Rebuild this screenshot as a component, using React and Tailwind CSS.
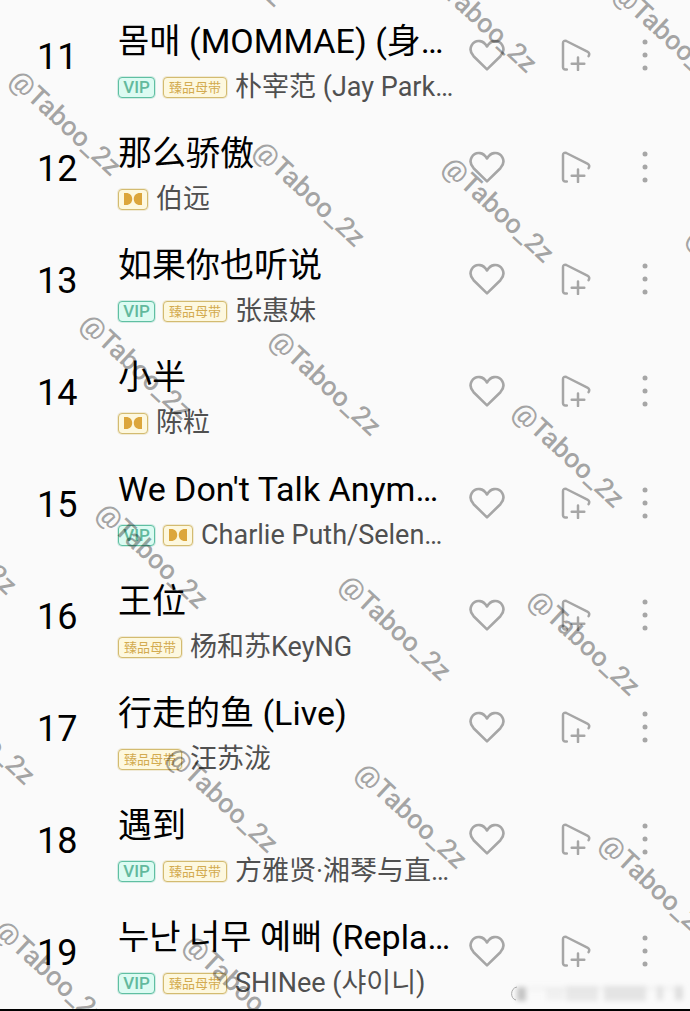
import React, { useState } from 'react';
import clsx from 'clsx';

const songs = [
  { rank: 11, title: '몸매 (MOMMAE) (身…', artist: '朴宰范 (Jay Park…', vip: true, badge: 'master' },
  { rank: 12, title: '那么骄傲', artist: '伯远', badge: 'dolby' },
  { rank: 13, title: '如果你也听说', artist: '张惠妹', vip: true, badge: 'master' },
  { rank: 14, title: '小半', artist: '陈粒', badge: 'dolby' },
  { rank: 15, title: "We Don't Talk Anym…", artist: 'Charlie Puth/Selen…', vip: true, badge: 'dolby' },
  { rank: 16, title: '王位', artist: '杨和苏KeyNG', badge: 'master' },
  { rank: 17, title: '行走的鱼 (Live)', artist: '汪苏泷', badge: 'master' },
  { rank: 18, title: '遇到', artist: '方雅贤·湘琴与直…', vip: true, badge: 'master' },
  { rank: 19, title: '누난 너무 예뻐 (Repla…', artist: 'SHINee (샤이니)', vip: true, badge: 'master' },
];

// centre of the @ sign of every stamp
const stamps = [
  [187, -86], [439, -20], [627, -3],
  [23, 83], [267, 154], [456, 170], [700, 241],
  [94, 327], [283, 343], [526, 415],
  [-81, 502], [110, 516], [353, 588], [542, 603],
  [-63, 692], [180, 760], [369, 776], [613, 847],
  [8, 933], [197, 948], [441, 1021],
];

const HeartIcon = ({ filled }) => (
  <svg viewBox="0 0 36 32" className="h-8 w-9" fill={filled ? 'currentColor' : 'none'} stroke="currentColor" strokeWidth="2.6" strokeLinejoin="round" strokeLinecap="round">
    <path d="M18 30.4 4.6 17.2C-2.4 9.4 4.2 1.2 11 2.1c3 .4 5.3 2.5 7 5.4 1.7-2.9 4-5 7-5.4 6.8-.9 13.4 7.3 6.4 15.1Z" />
  </svg>
);

const PlayNextIcon = () => (
  <svg viewBox="0 0 36 32" className="h-8 w-9" fill="none" stroke="currentColor" strokeWidth="2.5" strokeLinejoin="round" strokeLinecap="round">
    <path d="M9.800 30.500H8.200a2.200 2.200 0 0 1-2.200-2.200V4c0-1.900 1.600-2.800 3.300-2L30.400 12.600c2 1 2.300 2.700 1.200 4.500" />
    <path d="M21 18.600v12.500M14.700 24.800h12.600" />
  </svg>
);

const MoreIcon = () => (
  <svg viewBox="0 0 36 32" className="h-8 w-9" fill="currentColor">
    <circle cx="18" cy="3" r="2.5" />
    <circle cx="18" cy="16" r="2.5" />
    <circle cx="18" cy="29" r="2.5" />
  </svg>
);

const VipBadge = () => (
  <span className="flex h-[21px] w-[37px] shrink-0 items-center justify-center rounded-[4px] border border-[#5fbfa2] bg-[#dcfbf2] text-[17px] leading-none font-medium text-[#62b99d] ring-1 ring-[#5fbfa2]/25">
    VIP
  </span>
);

const QualityBadge = ({ kind }) => (
  <span
    className={clsx(
      'flex h-[21px] shrink-0 items-center justify-center rounded-[4px] border border-[#d3bb70] bg-[#fdf8df] text-[13px] leading-none text-[#d3ab50] ring-1 ring-[#d3bb70]/25',
      kind === 'master' ? 'w-16' : 'w-[30px]'
    )}
  >
    {kind === 'master' ? (
      '臻品母带'
    ) : (
      <svg viewBox="0 0 18 12" className="h-3 w-[18px]" fill="#dca63c" role="img" aria-label="Dolby">
        <path d="M0 0h2c4 0 6.200 2.600 6.200 6S6 12 2 12H0ZM18 0h-2c-4 0-6.200 2.600-6.200 6S12 12 16 12h2Z" />
      </svg>
    )}
  </span>
);

const SongRow = ({ song }) => {
  const [liked, setLiked] = useState(false);
  return (
    <li className="flex h-28 items-start pr-[27px]">
      <span className="w-[118px] shrink-0 pt-[39px] pl-[37px] text-[36px] leading-9 text-black">{song.rank}</span>
      <div className="min-w-0 flex-1 pt-[19px]">
        <div className="text-[34px] leading-[44px] whitespace-nowrap text-black">{song.title}</div>
        <div className="mt-2 flex h-8 items-center gap-2 whitespace-nowrap">
          {song.vip && <VipBadge />}
          <QualityBadge kind={song.badge} />
          <span className="text-[27px] leading-8 text-[#505050]">{song.artist}</span>
        </div>
      </div>
      <div className="flex shrink-0 items-center pt-[39px] text-[#a6a6a6]">
        <button type="button" aria-label="Like" aria-pressed={liked} onClick={() => setLiked(!liked)} className="mr-13">
          <HeartIcon filled={liked} />
        </button>
        <button type="button" aria-label="Play next" className="mr-[34px]">
          <PlayNextIcon />
        </button>
        <button type="button" aria-label="More">
          <MoreIcon />
        </button>
      </div>
    </li>
  );
};

const Stamps = () => (
  <div aria-hidden="true" className="pointer-events-none absolute inset-0 overflow-hidden">
    {stamps.map(([left, top]) => (
      <div key={`${left},${top}`} className="absolute size-0 rotate-[43deg]" style={{ left, top }}>
        <span className="absolute -top-4 -left-3 text-[27px] leading-8 font-medium whitespace-nowrap text-black/35">@Taboo_2z</span>
      </div>
    ))}
  </div>
);

const Smudge = () => (
  <svg viewBox="0 0 180 24" className="absolute right-0 bottom-1 h-6 w-[180px]" aria-hidden="true">
    <defs>
      <filter id="soft" x="-10%" y="-30%" width="120%" height="160%">
        <feGaussianBlur stdDeviation="2.8" />
      </filter>
    </defs>
    <g filter="url(#soft)" fill="#dcdcdc">
      <rect x="7" y="6" width="9" height="14" fill="#c4c4c4" />
      <rect x="18" y="6" width="152" height="3" opacity="0.3" />
      <rect x="36" y="7" width="18" height="12" opacity="0.3" />
      <rect x="56" y="5" width="32" height="15" opacity="0.6" />
      <rect x="94" y="5" width="42" height="15" opacity="0.7" />
      <rect x="147" y="5" width="6" height="14" opacity="0.8" />
      <rect x="165" y="5" width="8" height="14" opacity="0.9" />
    </g>
    <path d="M7 6C0 7 0 18 6 19" fill="none" stroke="#aaa" strokeWidth="1" />
  </svg>
);

const App = () => (
  <main className="relative min-h-screen overflow-hidden border-b-2 border-black bg-[#fafafa] font-[Roboto,'Noto_Sans_CJK_SC','Noto_Sans_CJK_KR',sans-serif]">
    <ol>
      {songs.map((song) => (
        <SongRow key={song.rank} song={song} />
      ))}
    </ol>
    <Stamps />
    <Smudge />
  </main>
);

export default App;
